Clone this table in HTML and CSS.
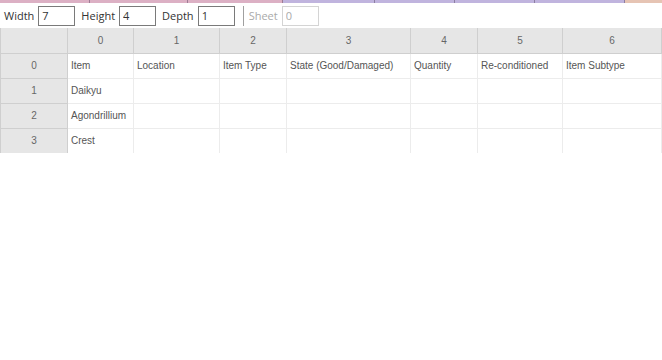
FILE: index.html
```html
<!DOCTYPE html>
<html lang="en">

<head>
    <meta charset="UTF-8">
    <meta name="viewport" content="width=device-width, initial-scale=1.0">
    <title>Sheet</title>
    <link rel="stylesheet" href="styles.css">
</head>

<body>

    <div class="faixa">
        <span class="seg rosa s1"></span>
        <span class="seg rosa s2"></span>
        <span class="seg rosa s3"></span>
        <span class="seg roxo s4"></span>
        <span class="seg roxo s5"></span>
        <span class="seg roxo s6"></span>
        <span class="seg roxo s7"></span>
        <span class="seg pessego s8"></span>
    </div>

    <div class="barra">
        <label class="rotulo">Width</label>
        <input class="campo" value="7">
        <label class="rotulo">Height</label>
        <input class="campo" value="4">
        <label class="rotulo">Depth</label>
        <input class="campo" value="1">
        <span class="divisor"></span>
        <label class="rotulo desligado">Sheet</label>
        <input class="campo desligado" value="0" disabled>
    </div>

    <table class="grade">
        <colgroup>
            <col style="width: 67px">
            <col style="width: 66px">
            <col style="width: 86px">
            <col style="width: 67px">
            <col style="width: 124px">
            <col style="width: 67px">
            <col style="width: 85px">
            <col>
        </colgroup>
        <tr>
            <th class="canto"></th>
            <th>0</th>
            <th>1</th>
            <th>2</th>
            <th>3</th>
            <th>4</th>
            <th>5</th>
            <th>6</th>
        </tr>
        <tr>
            <th>0</th>
            <td>Item</td>
            <td>Location</td>
            <td>Item Type</td>
            <td>State (Good/Damaged)</td>
            <td>Quantity</td>
            <td>Re-conditioned</td>
            <td>Item Subtype</td>
        </tr>
        <tr>
            <th>1</th>
            <td>Daikyu</td>
            <td></td>
            <td></td>
            <td></td>
            <td></td>
            <td></td>
            <td></td>
        </tr>
        <tr>
            <th>2</th>
            <td>Agondrillium</td>
            <td></td>
            <td></td>
            <td></td>
            <td></td>
            <td></td>
            <td></td>
        </tr>
        <tr>
            <th>3</th>
            <td>Crest</td>
            <td></td>
            <td></td>
            <td></td>
            <td></td>
            <td></td>
            <td></td>
        </tr>
    </table>

</body>

</html>
```

FILE: styles.css
```css
* {
    margin: 0;
    padding: 0;
    box-sizing: border-box;
}

body {
    width: 662px;
    background-color: white;
    font-family: 'Open Sans', 'Liberation Sans', sans-serif;
    overflow: hidden;
}

.faixa {
    display: flex;
    height: 3px;
}

.seg {
    height: 3px;
    border-right: 1px solid rgba(80, 60, 90, 0.45);
}

.rosa {
    background-color: #dcb0c4;
}

.roxo {
    background-color: #c0b4de;
}

.pessego {
    background-color: #e6c4b4;
    border-right: none;
    flex: 1;
}

.s1 { width: 90px; }
.s2 { width: 98px; }
.s3 { width: 95px; }
.s4 { width: 92px; }
.s5 { width: 80px; }
.s6 { width: 80px; }
.s7 { width: 90px; }

.barra {
    display: flex;
    align-items: center;
    height: 25px;
    padding-left: 4px;
    font-size: 11px;
    color: #333;
}

.rotulo {
    margin-right: 4px;
}

.campo {
    width: 37px;
    height: 20px;
    border: 1px solid #7a7a7a;
    padding-left: 3px;
    font-family: inherit;
    font-size: 11px;
    color: #333;
    margin-right: 6px;
    outline: none;
    background: white;
}

.divisor {
    width: 1px;
    height: 20px;
    background-color: #a0a0a0;
    margin: 0 5px 0 2px;
}

.desligado {
    color: #aaa;
}

.campo.desligado {
    border-color: #d4d4d4;
}

.grade {
    border-collapse: collapse;
    table-layout: fixed;
    width: 662px;
    font-family: 'Liberation Sans', Arial, sans-serif;
    font-size: 10px;
    color: #555;
}

.grade tr {
    height: 25px;
}

.grade th {
    background-color: #e6e6e6;
    font-weight: normal;
    border: 1px solid #cfcfcf;
    border-top: none;
    text-align: center;
    color: #666;
}

.grade td {
    border: 1px solid #ececec;
    padding-left: 3px;
    white-space: nowrap;
    overflow: hidden;
}

.grade tr:last-child td,
.grade tr:last-child th {
    border-bottom: none;
}
```
